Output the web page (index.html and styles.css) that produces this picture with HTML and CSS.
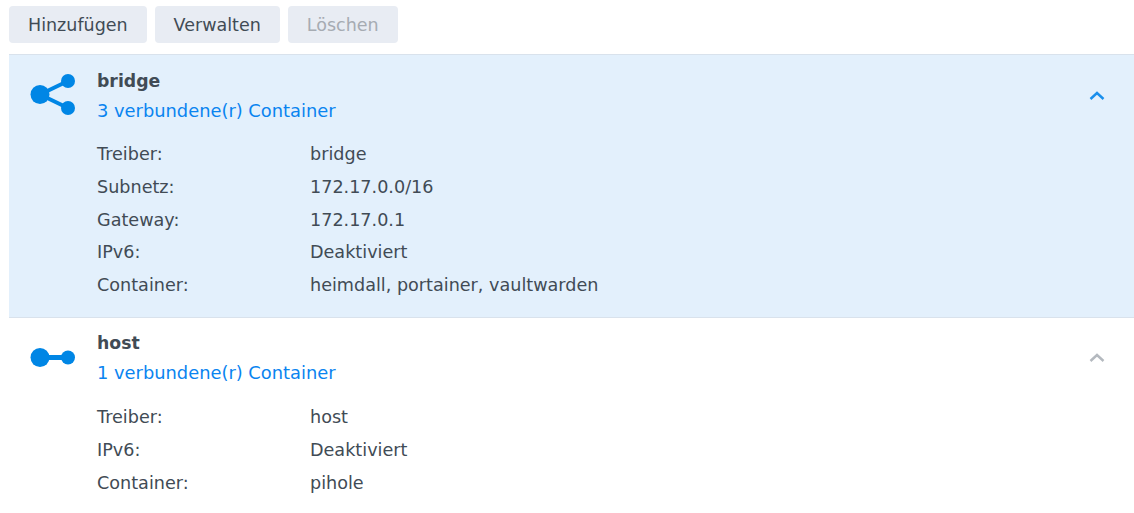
FILE: index.html
```html
<!DOCTYPE html>
<html lang="de">
<head>
    <meta charset="UTF-8">
    <title>Netzwerk</title>
    <link rel="stylesheet" href="styles.css">
</head>
<body>

    <div class="toolbar">
        <button class="btn">Hinzufügen</button>
        <button class="btn">Verwalten</button>
        <button class="btn btn-disabled" disabled>Löschen</button>
    </div>

    <div class="network-list">
        <div class="network-item selected">
            <svg class="net-icon" width="48" height="48" viewBox="0 0 48 48">
                <path d="M11 22.5 L39 9 M11 22.5 L39 36" stroke="#0086e5" stroke-width="4" fill="none"/>
                <circle cx="11" cy="22.5" r="9.5" fill="#0086e5"/>
                <circle cx="39" cy="9" r="7" fill="#0086e5"/>
                <circle cx="39" cy="36" r="7" fill="#0086e5"/>
            </svg>
            <div class="net-body">
                <div class="net-name">bridge</div>
                <div class="net-count">3 verbundene(r) Container</div>
                <div class="net-details">
                    <div class="label">Treiber:</div><div>bridge</div>
                    <div class="label">Subnetz:</div><div>172.17.0.0/16</div>
                    <div class="label">Gateway:</div><div>172.17.0.1</div>
                    <div class="label">IPv6:</div><div>Deaktiviert</div>
                    <div class="label">Container:</div><div>heimdall, portainer, vaultwarden</div>
                </div>
            </div>
            <svg class="chevron" width="16" height="10" viewBox="0 0 16 10">
                <path d="M1.5 8 L8 2 L14.5 8" stroke="#1a8fec" stroke-width="2.4" fill="none"/>
            </svg>
        </div>
        <div class="network-item">
            <svg class="net-icon" width="48" height="48" viewBox="0 0 48 48">
                <path d="M11 23.5 L39 23.5" stroke="#0086e5" stroke-width="5" fill="none"/>
                <circle cx="11" cy="23.5" r="9.5" fill="#0086e5"/>
                <circle cx="39" cy="23.5" r="7" fill="#0086e5"/>
            </svg>
            <div class="net-body">
                <div class="net-name">host</div>
                <div class="net-count">1 verbundene(r) Container</div>
                <div class="net-details">
                    <div class="label">Treiber:</div><div>host</div>
                    <div class="label">IPv6:</div><div>Deaktiviert</div>
                    <div class="label">Container:</div><div>pihole</div>
                </div>
            </div>
            <svg class="chevron" width="16" height="10" viewBox="0 0 16 10">
                <path d="M1.5 8 L8 2 L14.5 8" stroke="#b4b9bf" stroke-width="2.4" fill="none"/>
            </svg>
        </div>
    </div>

</body>
</html>
```

FILE: styles.css
```css
* {
    box-sizing: border-box;
    margin: 0;
    padding: 0;
    font-family: 'DejaVu Sans', sans-serif;
}
body {
    background-color: #fff;
    color: #414b55;
    font-size: 17.6px;
    padding: 6px 0 0 9px;
}
.toolbar {
    display: flex;
    gap: 8px;
    margin-bottom: 11px;
}
.btn {
    height: 37px;
    padding: 0 19px;
    background-color: #e8ecf3;
    color: #414b55;
    border: none;
    border-radius: 4px;
    font-size: 17.5px;
}
.btn-disabled {
    color: #a6abb2;
}
.network-item {
    display: flex;
    align-items: flex-start;
    padding: 9px 0 0 20px;
    border-top: 1px solid #d9e2ec;
}
.network-item.selected {
    background-color: #e3f0fc;
    height: 263px;
    padding-top: 10px;
}
.net-icon {
    margin-top: 7px;
    margin-right: 20px;
    flex-shrink: 0;
}
.net-body {
    flex: 1;
}
.net-name {
    font-weight: bold;
    font-size: 17.3px;
    height: 32px;
    line-height: 32px;
}
.net-count {
    color: #0a84f0;
    font-size: 17.85px;
    height: 27px;
    line-height: 27px;
}
.net-details {
    display: grid;
    grid-template-columns: 213px 1fr;
    grid-auto-rows: 32.8px;
    line-height: 32.8px;
    margin-top: 15px;
}
.selected .net-details {
    margin-top: 14px;
}
.chevron {
    margin: 26px 29px 0 0;
}
```
